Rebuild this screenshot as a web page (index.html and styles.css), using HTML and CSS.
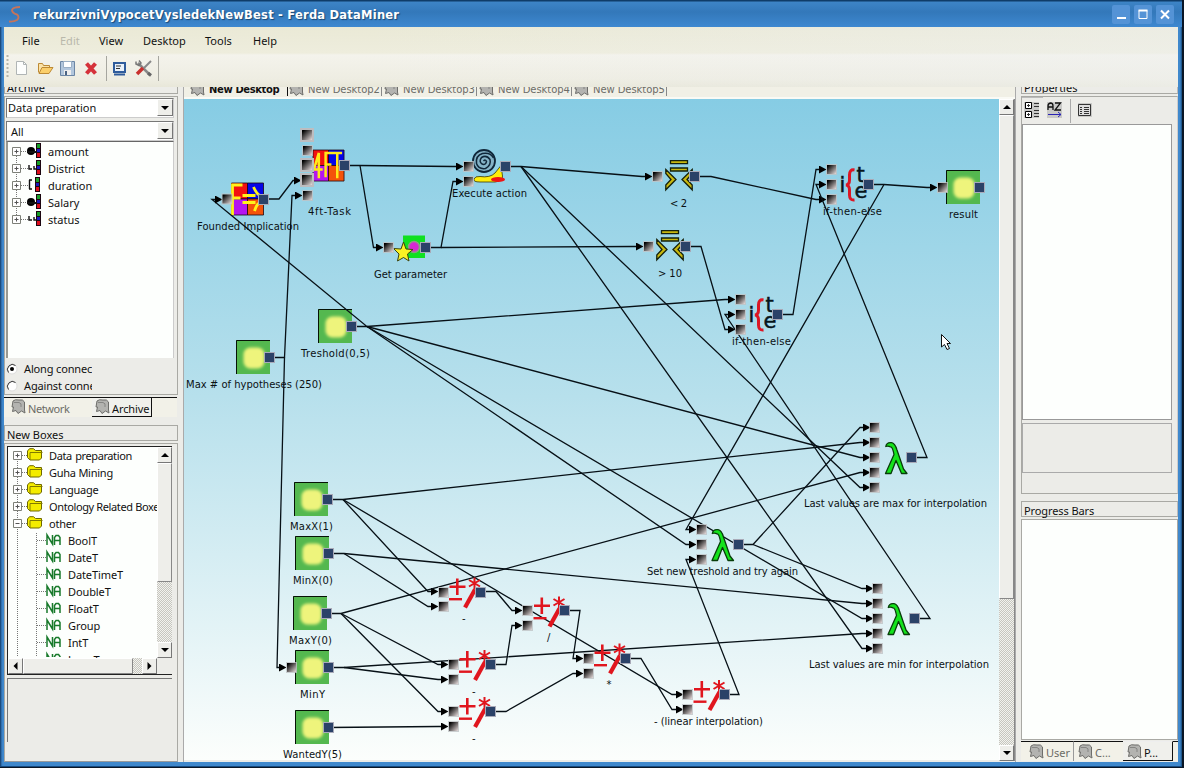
FILE: index.html
```html
<!DOCTYPE html>
<html lang="en">
<head>
<meta charset="utf-8">
<title>rekurzivniVypocetVysledekNewBest - Ferda DataMiner</title>
<link rel="stylesheet" href="styles.css">
</head>
<body>
<svg class="defs" width="0" height="0">
  <defs>
    <linearGradient id="sockg" x1="0" y1="0" x2="1" y2="1"><stop offset=".1" stop-color="#000"/><stop offset="1" stop-color="#e6dcdc"/></linearGradient>
    <linearGradient id="sky" x1="0" y1="0" x2="0" y2="1"><stop offset="0" stop-color="#86cce4"/><stop offset=".45" stop-color="#b7e0ec"/><stop offset="1" stop-color="#fcfefc"/></linearGradient>
    <filter id="soft" x="-.3" y="-.3" width="1.6" height="1.6"><feGaussianBlur stdDeviation="1.6"/></filter>
    <marker id="arr" viewBox="0 0 8 8" refX="0" refY="4" markerWidth="8" markerHeight="8" markerUnits="userSpaceOnUse" orient="0"><path d="M0 0L7.5 4L0 8z"/></marker>
    <g id="in"><rect x="-5.500" y="-5.500" width="11" height="11" fill="#bfc3c6" opacity=".8"/><rect x="-4.500" y="-4.500" width="9" height="9" fill="url(#sockg)"/></g>
    <g id="inb"><rect x="-7" y="-7" width="14" height="14" fill="#bdbdc0"/><rect x="-5" y="-5" width="10" height="10" fill="url(#sockg)"/></g>
    <g id="out"><rect x="-5.500" y="-5.500" width="11" height="11" fill="#a9aab8"/><rect x="-4.500" y="-4.500" width="9" height="9" fill="#2b4268"/></g>
    <g id="box"><rect width="34" height="34" fill="#54b84f"/><rect x="7.500" y="7.500" width="21" height="21" rx="7" fill="#eef47c" filter="url(#soft)"/><path d="M.5 34V.5H34" fill="none" stroke="#061206"/></g>
    <g id="lam" stroke-linejoin="round"><path d="M.8 4.500Q1.500 0 6.500 .6Q10 1 12 8L18.500 27L22 31.500H16.500L11 18.500L6 31.500H.5L9 12.500Q7.500 4.500 5.500 4.800Q3 3.800 .8 4.500z" fill="#14e31c" stroke="#083d0a" stroke-width="1.300"/></g>
    <g id="ari" fill="none" stroke="#e0161e"><path d="M1 9.300H17M8.800 1V17.500" stroke-width="2.600"/><path d="M.5 21.700H13.500" stroke-width="2.400"/><path d="M16.500 30L26.500 12" stroke-width="4.200"/><path d="M26 0V12M20.500 2.500L31.500 9M20.500 9L31.500 2.500" stroke-width="2"/></g>
    <g id="cmp" stroke="#15210c" fill="#c8b80f" stroke-width="1.300"><path d="M5.500.6h17v3h-17zM5.500 8h17v3h-17z"/><path d="M.8 9.500L11 19.500L.8 29.800V25L6 19.500L.8 13.500zM27.200 9.500L17 19.500L27.200 29.800V25L22 19.500L27.200 13.500z"/></g>
    <g id="ite"><text x="0" y="23" class="itef">i</text><path d="M15 1Q10 0 10 6V11Q10 15.500 6.500 16Q10 16.500 10 21V26Q10 31.500 15 31" fill="none" stroke="#dc1624" stroke-width="3"/><text x="17" y="12.500" class="itef">t</text><text x="15" y="29" class="itef">e</text></g>
    <g id="quad" stroke="#1c0610" stroke-width=".8"><path d="M0 0H16V16H0z" fill="#f21010"/><path d="M16 0H32V16H16z" fill="#0505e8"/><path d="M0 16H16V32H0z" fill="#b414f0"/><path d="M16 16H32V32H16z" fill="#f4520a"/></g>
    <g id="tabi"><path d="M2 2Q4 0 8 1Q12 0 13.500 3V11L14 14L10.500 12L7 14.500L5 11.500L1.500 12.500L2.500 8H1z" fill="#b3b3b0" stroke="#6d6d6a"/><path d="M3 3.500H8Q11 4 10 8" fill="none" stroke="#858583"/></g>
    <g id="plus"><path d="M.5.5h8v8h-8z" fill="#fff" stroke="#7d8078"/><path d="M2.500 4.500h4M4.500 2.500v4" stroke="#555"/></g>
    <g id="minus"><path d="M.5.5h8v8h-8z" fill="#fff" stroke="#7d8078"/><path d="M2.500 4.500h4" stroke="#555"/></g>
    <g id="lights"><path d="M0 0h5v15h-5z" fill="#1b0610"/><path d="M1 1h3v4h-3z" fill="#17a029"/><path d="M1 6h3v3h-3z" fill="#1a18c0"/><path d="M1 10h3v4h-3z" fill="#dd0d1c"/></g>
    <g id="folder"><path d="M.5 3L2.500.7H6.500L8.500 2.500H14.500V10L12.500 12H3L.5 9.500z" fill="#f4ec00" stroke="#6e6800"/><path d="M3 12V4.500H15.500" fill="none" stroke="#827b00"/></g>
    <g id="na" fill="none" stroke="#187a2b" stroke-width="1.500"><path d="M1 11V1L6.500 10V1M8.500 11V3.500L10 1.500H12.500L14 3.500V11M8.500 6.500H14"/></g>
    <g id="up"><path d="M0 4L4 0L8 4z"/></g>
    <g id="down"><path d="M0 0L4 4L8 0z"/></g>
  </defs>
</svg>

<div class="window">
  <header class="title">
    <svg class="logo" width="14" height="17"><path d="M12 1Q5 1 4 4Q4 7 9 8.500Q12 11 9 14Q6 16 1 15.500" fill="none" stroke="#c4745c" stroke-width="1.900"/></svg>
    <h1 class="caption">rekurzivniVypocetVysledekNewBest - Ferda DataMiner</h1>
    <div class="winbtns">
      <span class="wb"><svg width="18" height="18"><path d="M5 13h9" stroke="#fff" stroke-width="2"/></svg></span>
      <span class="wb"><svg width="18" height="18"><path d="M5 5.500h8v8h-8z" fill="none" stroke="#fff"/><path d="M4.500 5.500h9" stroke="#fff" stroke-width="2"/></svg></span>
      <span class="wb"><svg width="18" height="18"><path d="M5 5.500L13 13.500M13 5.500L5 13.500" stroke="#fff" stroke-width="2"/></svg></span>
    </div>
  </header>
  <div class="top">
    <nav class="menu"><span class="m1">File</span><span class="m2 dis">Edit</span><span class="m3">View</span><span class="m4">Desktop</span><span class="m5">Tools</span><span class="m6">Help</span></nav>
    <div class="toolbar">
      <svg width="156" height="33">
        <path d="M3.500 1V25" stroke="#b5b5aa" stroke-width="2" stroke-dasharray="2 2"/>
        <path d="M12.500 7.500h7l3 3v10h-10z" fill="#fdfefd" stroke="#b0b5b5"/><path d="M19.500 7.500v3h3" fill="none" stroke="#b0b5b5"/>
        <path d="M34.500 18.500v-9h4l1 2h6v3" fill="#fbe3a8" stroke="#bd8a35"/><path d="M35 19.500l3-6h11l-4 6z" fill="#fbcf6b" stroke="#bd8a35"/>
        <path d="M56.500 7.500h14v14h-14z" fill="#b3c7dd" stroke="#6c86a5"/><path d="M59.500 7.500h8v6h-8z" fill="#fff" stroke="#9aafc5"/><path d="M60 16h7v5h-7z" fill="#eee"/><path d="M61 17h2v4h-2z" fill="#4b6382"/>
        <path d="M82.500 9.500L91.500 19.500M91.500 9.500L82.500 19.500" stroke="#d5323b" stroke-width="4"/>
        <path d="M102.500 2V27M154.500 2V27" stroke="#a6a69f"/>
        <path d="M110 9h11v9h-11z" fill="#e9f1fa" stroke="#2f5c9c" stroke-width="2"/><path d="M112 12h5M112 14.500h4" stroke="#333"/><path d="M110 20.500h11" stroke="#2f5c9c" stroke-width="2"/>
        <path d="M134 9L146 21" stroke="#888" stroke-width="2.500"/><path d="M132 7.500V10L135 11.500L137 9L135 6.500" fill="none" stroke="#777" stroke-width="1.500"/><path d="M147 7L140 14" stroke="#888" stroke-width="2"/><path d="M139 14L133 20" stroke="#c9302e" stroke-width="3.500"/><path d="M144 19L147 21.500" stroke="#666" stroke-width="3"/>
      </svg>
    </div>
  </div>

  <main class="main">
    <aside class="left">
      <div class="ptitle cut"><span class="t-archive">Archive</span></div>
      <section class="archive">
        <div class="combo"><span class="t-dp">Data preparation</span><b class="cbtn"><svg width="8" height="4"><use href="#down"/></svg></b></div>
        <div class="combo second"><span class="t-all">All</span><b class="cbtn"><svg width="8" height="4"><use href="#down"/></svg></b></div>
        <div class="tree">
          <svg class="glyphs" width="36" height="90"><path d="M9.500 8V78M14 9.500h8M14 26.500h8M14 43.500h8M14 60.500h8M14 77.500h8" fill="none" stroke="#777" stroke-dasharray="1 1"/>
            <use href="#plus" x="5" y="5"/><use href="#plus" x="5" y="22"/><use href="#plus" x="5" y="39"/><use href="#plus" x="5" y="56"/><use href="#plus" x="5" y="73"/>
            <use href="#lights" x="29" y="1"/><use href="#lights" x="29" y="18"/><use href="#lights" x="28" y="35"/><use href="#lights" x="29" y="52"/><use href="#lights" x="29" y="69"/>
            <circle cx="24" cy="9" r="4"/><circle cx="24" cy="60" r="4"/><path d="M20 10h9M20 61h9" stroke="#111" stroke-width="2"/>
            <path d="M22 23v4h3M27 24v3h2M22 74v4h3M27 75v3h2M22 38h3M22.500 38v9M22 47h3" fill="none" stroke="#111" stroke-width="1.400"/></svg>
          <ul class="items"><li>amount</li><li>District</li><li>duration</li><li>Salary</li><li>status</li></ul>
        </div>
        <div class="radios">
          <div class="radio"><svg width="12" height="12"><circle cx="6" cy="6" r="5" fill="#fff" stroke="#ddd"/><path d="M2.500 9.500A5 5 0 0 1 9.500 2.500" fill="none" stroke="#333"/><circle cx="6" cy="6" r="2"/></svg><span>Along connec</span></div>
          <div class="radio"><svg width="12" height="12"><circle cx="6" cy="6" r="5" fill="#fff" stroke="#ddd"/><path d="M2.500 9.500A5 5 0 0 1 9.500 2.500" fill="none" stroke="#333"/></svg><span>Against conne</span></div>
        </div>
      </section>
      <div class="ltabs">
        <div class="lt1"><svg width="15" height="15"><use href="#tabi"/></svg><span>Network</span></div>
        <div class="lt2"><svg width="15" height="15"><use href="#tabi"/></svg><span>Archive</span></div>
      </div>
      <div class="ptitle"><span>New Boxes</span></div>
      <section class="boxes">
        <div class="btree">
          <div class="bview">
            <svg class="glyphs" width="58" height="210"><path d="M9.500 8V210M28.500 86V210M14 8.500h6M14 25.500h6M14 42.500h6M14 59.500h6M14 76.500h6M29 93.500h9M29 110.500h9M29 127.500h9M29 144.500h9M29 161.500h9M29 178.500h9M29 195.500h9" fill="none" stroke="#777" stroke-dasharray="1 1"/>
              <use href="#plus" x="5" y="4"/><use href="#plus" x="5" y="21"/><use href="#plus" x="5" y="38"/><use href="#plus" x="5" y="55"/><use href="#minus" x="5" y="72"/>
              <use href="#folder" x="19" y="1"/><use href="#folder" x="19" y="18"/><use href="#folder" x="19" y="35"/><use href="#folder" x="19" y="52"/><use href="#folder" x="19" y="69"/>
              <use href="#na" x="38" y="87"/><use href="#na" x="38" y="104"/><use href="#na" x="38" y="121"/><use href="#na" x="38" y="138"/><use href="#na" x="38" y="155"/><use href="#na" x="38" y="172"/><use href="#na" x="38" y="189"/><use href="#na" x="38" y="206"/></svg>
            <ul class="items bi"><li>Data preparation</li><li>Guha Mining</li><li>Language</li><li>Ontology Related Boxes</li><li>other</li><li class="sub">BoolT</li><li class="sub">DateT</li><li class="sub">DateTimeT</li><li class="sub">DoubleT</li><li class="sub">FloatT</li><li class="sub">Group</li><li class="sub">IntT</li><li class="sub">LongT</li></ul>
          </div>
          <div class="vs"><b class="sb"><svg width="8" height="4"><use href="#up"/></svg></b><i class="thumb"></i><b class="sb end"><svg width="8" height="4"><use href="#down"/></svg></b></div>
          <div class="hs"><b class="sb"><svg width="5" height="8"><path d="M4.500 0v8L.5 4z"/></svg></b><i class="hthumb"></i><b class="sb end"><svg width="5" height="8"><path d="M.5 0v8L4.500 4z"/></svg></b></div>
          <div class="corner"></div>
        </div>
        <div class="hint"></div>
      </section>
    </aside>

    <section class="center">
      <div class="dtabs">
        <div class="dt on"><svg width="15" height="15"><use href="#tabi"/></svg><span>New Desktop</span></div>
        <div class="dt"><svg width="15" height="15"><use href="#tabi"/></svg><span>New Desktop2</span></div>
        <div class="dt"><svg width="15" height="15"><use href="#tabi"/></svg><span>New Desktop3</span></div>
        <div class="dt"><svg width="15" height="15"><use href="#tabi"/></svg><span>New Desktop4</span></div>
        <div class="dt"><svg width="15" height="15"><use href="#tabi"/></svg><span>New Desktop5</span></div>
      </div>
      <div class="work">
        <svg class="canvas" width="815" height="661" viewBox="184 99 815 661">
          <rect x="184" y="99" width="815" height="661" fill="url(#sky)"/>
          <g>
            <use href="#box" x="236" y="340"/><use href="#box" x="318" y="309"/><use href="#box" x="294" y="482"/><use href="#box" x="295" y="536"/><use href="#box" x="293" y="596"/><use href="#box" x="295" y="650"/><use href="#box" x="295" y="710"/><use href="#box" x="946" y="170"/>
          </g>
          <g transform="translate(231.500 183)"><use href="#quad"/><path d="M11 2H1V32M1 15H9M11 12.500H24M11 19.500H24M22 4Q25 11 29 13M29 19Q25 21 23 28" fill="none" stroke="#fff21a" stroke-width="2.800"/></g>
          <g transform="translate(313 150) scale(.97)"><use href="#quad"/><path d="M6 29V3L1 20H10M13 28V3H21M13 15H19M19 3H30M25 3V29" fill="none" stroke="#ffe81a" stroke-width="2.600"/></g>
          <g><path d="M474 179Q475 176 480 176.500Q490 178 495 173L501 165.500L502.500 176Q503 181 495 182H480Q473 182 474 179z" fill="#ffee0a" stroke="#3a3600" stroke-width=".8"/><ellipse cx="498" cy="179.500" rx="7" ry="2.500" fill="#ee1515"/><circle cx="484" cy="161" r="11" fill="#84b3c7" stroke="#10273a" stroke-width="1.800"/><path d="M483.500 161Q485.500 159 486.500 161.500Q485.500 165.500 482 164Q478.500 161.500 481.500 157.500Q486.500 154.500 490 159.500Q491.500 165.500 485.500 168.500Q478.500 169.500 476.500 163.500Q475.500 155.500 482.500 153.500Q490.500 152 493.500 158" fill="none" stroke="#10273a" stroke-width="1.500"/></g>
          <g><rect x="403" y="235.500" width="22" height="22.500" fill="#10e021"/><circle cx="414" cy="247" r="5.500" fill="#d628d2" stroke="#8b9e82" stroke-width="1.500"/><path d="M403.500 242L406 249L413 249.500L407.500 254L409 261L403.500 257.500L397.500 261L399 254L393.500 248.500L401 249z" fill="#fbf224" stroke="#3b420e"/></g>
          <use href="#cmp" x="665" y="160"/><use href="#cmp" x="656" y="230"/>
          <use href="#ite" x="839.500" y="169"/><use href="#ite" x="748.500" y="299"/>

          <g class="wires">
            <path d="M263 199H279L293 180.500H294"/>
            <path d="M351 326.500H367L212 199.500H215"/>
            <path d="M344 165.500H360L453 166.500H456"/>
            <path d="M360 165.500L373.500 247.500H376"/>
            <path d="M425 247.500H441L453 181.500H456"/>
            <path d="M441 247.500L633 246.500H636"/>
            <path d="M269 357.500H284.500L292 195.500H295"/>
            <path d="M284.500 357.500L277 667.500H279"/>
            <path d="M505 166.500H521L642 176.500H645"/>
            <path d="M521 166.500L860 487.500H863"/>
            <path d="M521 166.500L862 648.500H866"/>
            <path d="M695 176.500H711L816 199.500H819"/>
            <path d="M686 246.500H701L725 329.500H728"/>
            <path d="M777 314.500H793L816 169.500H819"/>
            <path d="M869 184.500H884L927 187.500H930"/>
            <path d="M884 184.500L686 529.500H689"/>
            <path d="M911 457.500H927L816 184.500H819"/>
            <path d="M914 618.500H930L725 314.500H728"/>
            <path d="M367 326.500L725 299.500H728"/>
            <path d="M367 326.500L860 457.500H863"/>
            <path d="M367 326.500L686 544.500H689"/>
            <path d="M367 326.500L862 618.500H866"/>
            <path d="M327 499.500H343L860 442.500H863"/>
            <path d="M343 499.500L672 694.500H676"/>
            <path d="M343 499.500L428 591.500H431"/>
            <path d="M328 553.500H344L862 603.500H866"/>
            <path d="M344 553.500L428 606.500H431"/>
            <path d="M326 613.500H341L860 472.500H863"/>
            <path d="M341 613.500L438 664.500H441"/>
            <path d="M341 613.500L438 711.500H441"/>
            <path d="M328 667.500H344L862 633.500H866"/>
            <path d="M344 667.500L438 679.500H441"/>
            <path d="M328 727.500L438 726.500H441"/>
            <path d="M480 591.500H496L512 610.500H515"/>
            <path d="M490 664.500H506L512 625.500H515"/>
            <path d="M564 610.500H580L573 658.500H576"/>
            <path d="M490 711.500H506L573 673.500H576"/>
            <path d="M625 658.500H641L672 709.500H676"/>
            <path d="M724 694.500H739L686 559.500H689"/>
            <path d="M738 544.500H753L860 427.500H863"/>
            <path d="M753 544.500L862 588.500H866"/>
          </g>
          <use href="#lam" x="885" y="442"/><use href="#lam" x="887.500" y="603"/><use href="#lam" x="711.500" y="529"/>
          <use href="#ari" x="448.500" y="577.500"/><use href="#ari" x="533" y="596.500"/><use href="#ari" x="593.500" y="643.500"/><use href="#ari" x="458.500" y="650"/><use href="#ari" x="458.500" y="697"/><use href="#ari" x="693" y="680"/>
          <g>
            <use href="#in" x="227" y="199"/><use href="#inb" x="307" y="135"/><use href="#in" x="307.500" y="150.500"/><use href="#inb" x="307" y="165"/><use href="#inb" x="307" y="180"/><use href="#in" x="307.500" y="195.500"/>
            <use href="#in" x="468.500" y="166.500"/><use href="#in" x="468.500" y="181.500"/><use href="#in" x="388.500" y="247.500"/><use href="#in" x="657.500" y="176.500"/><use href="#in" x="648.500" y="246.500"/>
            <use href="#in" x="831.500" y="169.500"/><use href="#in" x="831.500" y="184.500"/><use href="#in" x="831.500" y="199.500"/><use href="#in" x="740.500" y="299.500"/><use href="#in" x="740.500" y="314.500"/><use href="#in" x="740.500" y="329.500"/><use href="#in" x="942.500" y="187.500"/>
            <use href="#in" x="874.500" y="427.500"/><use href="#in" x="874.500" y="442.500"/><use href="#in" x="874.500" y="457.500"/><use href="#in" x="874.500" y="472.500"/><use href="#in" x="874.500" y="487.500"/>
            <use href="#in" x="877.500" y="588.500"/><use href="#in" x="877.500" y="603.500"/><use href="#in" x="877.500" y="618.500"/><use href="#in" x="877.500" y="633.500"/><use href="#in" x="877.500" y="648.500"/>
            <use href="#in" x="701.500" y="529.500"/><use href="#in" x="701.500" y="544.500"/><use href="#in" x="701.500" y="559.500"/>
            <use href="#in" x="443.500" y="592.500"/><use href="#in" x="443.500" y="606.500"/><use href="#in" x="527.500" y="610.500"/><use href="#in" x="527.500" y="625.500"/><use href="#in" x="588.500" y="658.500"/><use href="#in" x="588.500" y="673.500"/>
            <use href="#in" x="453.500" y="664.500"/><use href="#in" x="453.500" y="679.500"/><use href="#in" x="453.500" y="711.500"/><use href="#in" x="453.500" y="726.500"/><use href="#in" x="687.500" y="694.500"/><use href="#in" x="687.500" y="709.500"/><use href="#in" x="291.500" y="667.500"/>
          </g>
          <g>
            <use href="#out" x="263.500" y="199.500"/><use href="#out" x="344.500" y="165.500"/><use href="#out" x="505.500" y="166.500"/><use href="#out" x="425.500" y="247.500"/><use href="#out" x="694.500" y="176.500"/><use href="#out" x="685.500" y="246.500"/><use href="#out" x="868.500" y="184.500"/><use href="#out" x="777.500" y="314.500"/><use href="#out" x="979.500" y="187.500"/>
            <use href="#out" x="269.500" y="357.500"/><use href="#out" x="351.500" y="326.500"/><use href="#out" x="327.500" y="499.500"/><use href="#out" x="328.500" y="553.500"/><use href="#out" x="326.500" y="613.500"/><use href="#out" x="328.500" y="667.500"/><use href="#out" x="328.500" y="727.500"/>
            <use href="#out" x="911.500" y="457.500"/><use href="#out" x="914.500" y="618.500"/><use href="#out" x="738.500" y="544.500"/><use href="#out" x="480.500" y="592.500"/><use href="#out" x="564.500" y="610.500"/><use href="#out" x="625.500" y="658.500"/><use href="#out" x="490.500" y="664.500"/><use href="#out" x="490.500" y="711.500"/><use href="#out" x="724.500" y="694.500"/>
          </g>
          <g class="labels">
            <text x="197" y="230" textLength="102">Founded Implication</text><text x="308" y="215" textLength="43">4ft-Task</text><text x="452" y="197" textLength="75">Execute action</text><text x="374" y="278" textLength="73">Get parameter</text>
            <text x="670" y="207" textLength="17">&lt; 2</text><text x="658" y="277" textLength="24">&gt; 10</text><text x="823" y="215" textLength="59">if-then-else</text><text x="732" y="345" textLength="59">if-then-else</text><text x="949" y="218" textLength="29">result</text>
            <text x="301" y="357" textLength="69">Treshold(0,5)</text><text x="186" y="388" textLength="136">Max # of hypotheses (250)</text><text x="290" y="530" textLength="43">MaxX(1)</text><text x="293" y="584" textLength="40">MinX(0)</text><text x="289" y="644" textLength="43">MaxY(0)</text><text x="300" y="698" textLength="25">MinY</text><text x="283" y="758" textLength="59">WantedY(5)</text>
            <text x="804" y="507" textLength="183">Last values are max for interpolation</text><text x="809" y="668" textLength="180">Last values are min for interpolation</text><text x="647" y="575" textLength="151">Set new treshold and try again</text><text x="654" y="725" textLength="109">- (linear interpolation)</text>
            <text x="462" y="622">-</text><text x="547" y="641">/</text><text x="606.500" y="688">*</text><text x="472" y="695">-</text><text x="472" y="742">-</text>
          </g>
          <path d="M941.500 334.500V347L944.500 344.500L947 349.500L949.500 348.500L947 343.500H950.500z" fill="#fff" stroke="#111"/>
        </svg>
        <div class="cs"><b class="sb"><svg width="8" height="4"><use href="#up"/></svg></b><i class="thumb"></i><b class="sb end"><svg width="8" height="4"><use href="#down"/></svg></b></div>
      </div>
    </section>

    <aside class="right">
      <div class="ptitle cut"><span class="t-prop">Properties</span></div>
      <section class="props">
        <div class="ptools"><svg width="80" height="28"><path d="M.5 27V.5H22" fill="none" stroke="#bbb"/><path d="M3 5h15v16h-15zM26 5h15v16h-15zM57 6h14v14h-14z" fill="#c9c9c7"/>
          <path d="M4.500 5.500h6v6h-6zM4.500 14.500h6v6h-6z" fill="#fff" stroke="#000"/><path d="M6 8.500h3M7.500 7v3M6 17.500h3M7.500 16v3M13 6.500h5M13 9.500h5M13 13.500h5M13 16.500h5M13 19.500h5" stroke="#333"/>
          <path d="M27 13V9Q27 6.500 29.500 6Q32 6 32 9V13M27 10h5M34 6h5.500L34 13h6" fill="none" stroke="#111" stroke-width="1.300"/><path d="M27 17.500h13M37 15l3 2.500L37 20" fill="none" stroke="#2a23b5"/>
          <path d="M49.500 2V26" stroke="#aaa"/><path d="M57.500 7.500h12v11h-12z" fill="#ddd" stroke="#333"/><path d="M59 10.500h2M63 10.500h5M59 12.500h2M63 12.500h5M59 14.500h2M63 14.500h5M59 16.500h2M63 16.500h5" stroke="#333"/></svg></div>
        <div class="pgrid"></div>
        <div class="pdesc"></div>
      </section>
      <div class="ptitle prog"><span>Progress Bars</span></div>
      <div class="pbars"></div>
      <div class="rtabs">
        <div class="rt r1"><svg width="15" height="15"><use href="#tabi"/></svg><span>User</span></div>
        <div class="rt r2"><svg width="15" height="15"><use href="#tabi"/></svg><span>C...</span></div>
        <div class="rt r3"><svg width="15" height="15"><use href="#tabi"/></svg><span>P...</span></div>
        <div class="r4"></div>
      </div>
    </aside>
  </main>
</div>
</body>
</html>
```
FILE: styles.css
```css
* { box-sizing: border-box; }
body { margin: 0; background: #0a1626; font: 11px/17px "Noto Sans", "Open Sans", sans-serif; color: #111; overflow: hidden; }
svg { display: block; flex: none; }
.defs { position: absolute; }
ul { list-style: none; margin: 0; padding: 0; }
.window { width: 1182px; height: 767px; padding: 0 4px 5px; background: linear-gradient(90deg, #123a66 0, #3a7fc4 2px, #3f88cc 3px, #3f88cc 1180px, #174878 1182px); border-bottom: 1px solid #154a80; overflow: hidden; white-space: nowrap; }

.title { height: 27px; margin: 0 -4px; padding: 2px 8px 0 8px; display: flex; align-items: center; background: linear-gradient(#0f3c68 0, #0f3c68 1px, #3d84c6 2px, #3378ba 12px, #3e88d0); }
.logo { margin-right: 11px; }
.caption { margin: 0; font: bold 11.5px/20px "DejaVu Sans", sans-serif; letter-spacing: .23px; color: #fff; text-shadow: 1px 1px 1px #1a4672; flex: 1; }
.winbtns { display: flex; gap: 4px; }
.wb { width: 18px; height: 19px; background: #5493d6; border-radius: 2px; }

.top { height: 60px; background: linear-gradient(90deg, rgba(237,237,235,0) 30%, rgba(238,240,240,.5)), linear-gradient(#eae9d6 0, #eeeddd 26px, #f4f3ec 28px, #eeede2 52px, #e8e7d9 60px); }
.menu { height: 27px; padding: 5px 0 0 18px; display: flex; }
.menu span { flex: none; }
.m1 { width: 38px; } .m2 { width: 39px; } .m3 { width: 44px; } .m4 { width: 62px; } .m5 { width: 48px; }
.dis { color: #b9b8ab; }
.toolbar { height: 33px; }

.main { height: 675px; display: flex; background: #ecece8; }
.left { width: 180px; border-right: 1px solid #aaa; }
.ptitle { width: 174px; height: 16px; border: 1px solid #a9a9a4; padding: 1px 0 0 2px; line-height: 15px; }
.ptitle.cut { height: 7px; border-top: 0; display: flex; align-items: flex-end; padding: 0 0 0 2px; line-height: 11px; margin-bottom: 2px; overflow: hidden; }

.archive { width: 174px; height: 299px; border: 1px solid #a9a9a4; padding: 1px 3px 0 1px; }
.combo { height: 20px; width: 168px; background: #fff; border: 1px solid #777; border-right-color: #ccc; border-bottom-color: #ccc; display: flex; justify-content: space-between; padding-left: 1px; line-height: 17px; }
.combo.second { margin-top: 3px; padding-left: 4px; line-height: 19px; }
.cbtn { width: 16px; height: 17px; background: #eeeeea; border: 1px solid #fff; border-right-color: #777; border-bottom-color: #777; display: grid; place-items: center; }
.tree { height: 217px; width: 168px; background: #fdfffd; border-left: 2px solid #999992; border-top: 1px solid #666; border-right: 1px solid #ccc; display: flex; }
.tree .glyphs { margin-left: -1px; }
.items li { height: 17px; line-height: 19px; }
.tree .items { padding-left: 5px; }
.radios { height: 34px; padding-top: 1px; margin-top: 1px; overflow: hidden; width: 86px; }
.radio { display: flex; gap: 6px; height: 17px; align-items: center; letter-spacing: -.15px; }
.radio span { line-height: 17px; }
.ltabs { height: 20px; margin: 2px 0 8px; display: flex; width: 173px; background: #f2f1e8; border-top: 1px solid #111; }
.lt1 { width: 88px; display: flex; gap: 2px; padding: 1px 0 0 7px; color: #6c6c66; line-height: 19px; letter-spacing: -.4px; }
.lt2 { width: 60px; height: 19px; display: flex; gap: 2px; padding: 1px 0 0 3px; line-height: 19px; background: #f0f0ec; border-right: 1px solid #111; border-bottom: 1px solid #111; letter-spacing: -.1px; }

.boxes { width: 174px; height: 319px; margin-top: 2px; border: 1px solid #a9a9a4; border-bottom-color: #999; padding: 2px 4px 0 2px; }
.btree { width: 165px; height: 229px; border: 1px solid #222; border-right: 0; background: #fdfffd; display: grid; grid-template: 211px 16px / 149px 15px; }
.bview { display: flex; overflow: hidden; }
.bi { margin-left: -17px; }
.bi li { line-height: 17px; letter-spacing: -.25px; }
.bi li:first-child { letter-spacing: -.4px; }
.bi li:nth-child(4) { letter-spacing: -.38px; }
.bi li:first-child { letter-spacing: -.4px; word-spacing: 1px; }
.bi .sub { padding-left: 19px; letter-spacing: -.1px; }
.sb { width: 15px; height: 16px; background: #eeeeea; border: 1px solid #fff; border-right-color: #777; border-bottom-color: #777; display: grid; place-items: center; flex: none; }
.vs, .cs { display: flex; flex-direction: column; background: repeating-conic-gradient(#c6c6bf 0 25%, #f2f2ee 0 50%) 0 0 / 2px 2px; }
.thumb { height: 119px; background: #eeeeea; border: 1px solid #fff; border-right-color: #888; border-bottom-color: #888; flex: none; }
.end { margin-top: auto; }
.hs { display: flex; background: repeating-conic-gradient(#c6c6bf 0 25%, #f2f2ee 0 50%) 0 0 / 2px 2px; }
.hthumb { width: 110px; background: #eeeeea; border: 1px solid #fff; border-right-color: #888; border-bottom-color: #888; }
.hs .end { margin: 0 0 0 auto; }
.corner { background: #ecece8; }
.hint { width: 165px; height: 64px; margin-top: 3px; border-top: 1px solid #777; border-left: 1px solid #777; }

.center { width: 832px; background: #ecece8; border-right: 1px solid #aaa; }
.dtabs { height: 12px; display: flex; overflow: hidden; background: #f1f0e6; color: #6c6c66; align-items: flex-end; border-bottom: 2px solid #fafaf5; }
.dt { display: flex; height: 16px; width: 95px; padding-left: 1px; line-height: 15px; flex: none; font-family: "DejaVu Sans", sans-serif; font-size: 10px; letter-spacing: -.07px; margin-bottom: -1px; }
.dt span { margin-left: 4px; }
.dt::after { content: ""; flex: none; width: 1px; height: 14px; background: #888; margin: 0 1px 0 auto; }
.dt svg { margin-top: -1px; }
.dt.on { width: 104px; color: #111; font-weight: bold; padding-left: 6px; letter-spacing: -.37px; }
.dt.on::after { background: #111; margin-right: 0; }
.work { display: flex; }
.labels { font: 10px "DejaVu Sans", sans-serif; fill: #0b1114; }
.wires path { fill: none; stroke: #071016; stroke-width: 1.300; marker-end: url(#arr); }
.itef { font: 21px "DejaVu Sans", sans-serif; fill: #07151a; stroke: #07151a; stroke-width: .5px; }
.cs { width: 16px; height: 662px; border-right: 1px solid #888; }
.cs .thumb { height: 484px; }

.right { width: 157px; margin-left: 5px; }
.right .ptitle { width: 157px; border-right: 1px solid #bbb; }
.props { height: 398px; border: 1px solid #a9a9a4; border-right-color: #ccc; }
.ptools { height: 27px; overflow: hidden; }
.ptools svg { margin-left: -1px; }
.pgrid { width: 150px; height: 296px; border: 1px solid #999; background: #fdfffd; }
.pdesc { width: 150px; height: 50px; border: 1px solid #aaa; margin-top: 3px; }
.prog { margin-top: 7px; letter-spacing: -.1px; }
.pbars { height: 221px; margin-top: 2px; border: 1px solid #a9a9a4; background: #fdfffd; }
.rtabs { display: flex; margin-top: 1px; height: 20px; background: #f2f1e8; color: #6c6c66; }
.rt { display: flex; gap: 2px; border-top: 1px solid #111; padding-top: 2px; line-height: 18px; }
.r1 { width: 53px; padding-left: 8px; border-right: 1px solid #999; }
.r2 { width: 49px; padding-left: 4px; }
.r3 { width: 50px; padding-left: 4px; color: #111; border-top-color: #eee; border-right: 1px solid #111; border-bottom: 1px solid #111; background: #f0f0ec; }
.r4 { flex: 1; border-top: 1px solid #111; }
```
